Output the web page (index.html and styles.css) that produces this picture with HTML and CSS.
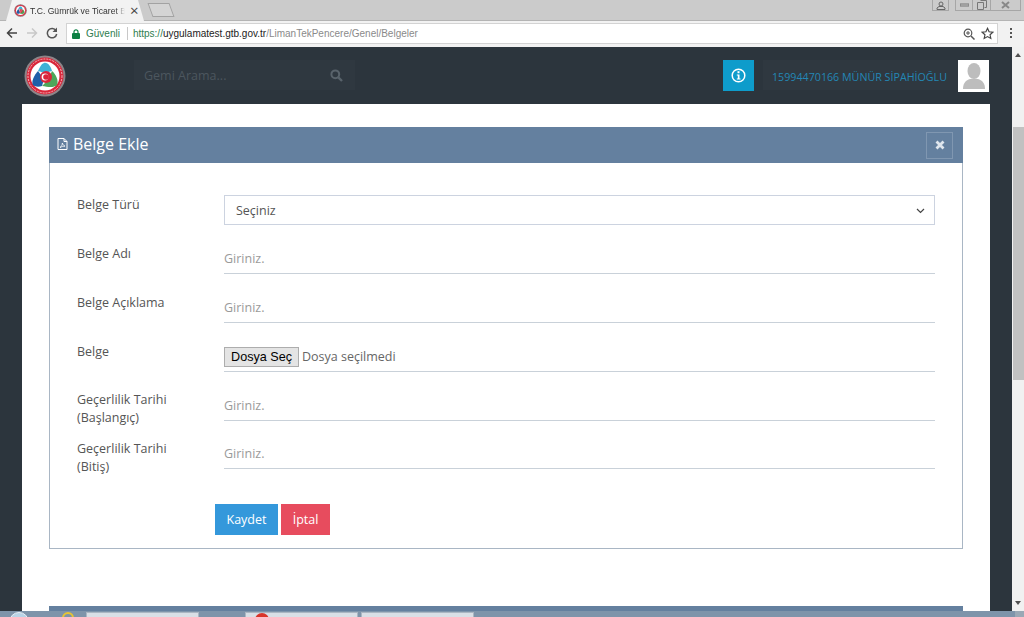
FILE: index.html
```html
<!DOCTYPE html>
<html lang="tr">
<head>
    <meta charset="UTF-8">
    <meta name="viewport" content="width=device-width, initial-scale=1.0">
    <title>T.C. Gümrük ve Ticaret Bakanlığı</title>
    <link rel="stylesheet" href="styles.css">
</head>
<body>
    <svg class="defs" width="0" height="0">
        <symbol id="logo" viewBox="0 0 42 42">
            <circle cx="21" cy="21" r="20.5" fill="#8d8488"/>
            <circle cx="21" cy="21" r="18.5" fill="#d9263a"/>
            <circle cx="21" cy="21" r="17" fill="none" stroke="#f0b8bc" stroke-width="1" stroke-dasharray="2 1"/>
            <circle cx="21" cy="21" r="14.5" fill="#fff"/>
            <path d="M20 8 C24 7 27 12 28 16 L21 18 L14 16 C16 12 17 9 20 8 Z" fill="#3fb2d6"/>
            <path d="M9 30 C7 27 10 20 14 16 L20 24 L18 31 C15 32 11 32 9 30 Z" fill="#1f5fa8"/>
            <path d="M28 16 C32 19 35 26 33 30 C30 33 24 32 18 31 L24 25 Z" fill="#4da65a"/>
            <circle cx="22" cy="22" r="6" fill="#d9263a"/>
            <circle cx="21" cy="22" r="3.4" fill="#fff"/>
            <circle cx="22" cy="22" r="2.8" fill="#d9263a"/>
        </symbol>
    </svg>

    <div class="tabstrip">
        <div class="tab">
            <svg class="favicon" width="13" height="13"><use href="#logo"/></svg>
            <span class="tab-title">T.C. Gümrük ve Ticaret Ba</span>
            <span class="tab-close">×</span>
        </div>
        <div class="newtab"></div>
        <div class="window-controls">
            <span class="win-btn win-user">
                <svg width="10" height="9" viewBox="0 0 10 9"><circle cx="5" cy="3" r="2" fill="none" stroke="#666"/><path d="M1 8.500h8V7L7 5.500H3L1 7z" fill="none" stroke="#666"/></svg>
            </span>
            <div class="win-group">
                <span class="win-btn win-min"><svg width="9" height="4"><rect y="1" width="9" height="2" fill="none" stroke="#777"/></svg></span>
                <span class="win-btn win-max"><svg width="10" height="10" viewBox="0 0 10 10"><path d="M3.500.5h6v7h-2M.5 2.500h6v7h-6z" fill="none" stroke="#777"/></svg></span>
                <span class="win-btn win-x"><svg width="9" height="8" viewBox="0 0 9 8"><path d="M1 1l7 6M8 1l-7 6" stroke="#888" stroke-width="2"/></svg></span>
            </div>
        </div>
    </div>

    <div class="toolbar">
        <div class="nav-icons">
            <svg width="12" height="12" viewBox="0 0 12 12"><path d="M11 6H2M6 1.500L1.500 6 6 10.500" fill="none" stroke="#444" stroke-width="1.500"/></svg>
            <svg width="12" height="12" viewBox="0 0 12 12"><path d="M1 6h9M6 1.500L10.500 6 6 10.500" fill="none" stroke="#c8c8c8" stroke-width="1.500"/></svg>
            <svg width="12" height="12" viewBox="0 0 12 12"><path d="M10 3.500A4.700 4.700 0 1 0 10.700 7" fill="none" stroke="#555" stroke-width="1.500"/><path d="M11 .5v4.500H6.500z" fill="#555"/></svg>
        </div>
        <div class="omnibox">
            <svg class="lock" width="8" height="10" viewBox="0 0 8 10"><path d="M2 4V2.800a2 2 0 0 1 4 0V4" fill="none" stroke="#0b8043" stroke-width="1.200"/><rect y="4" width="8" height="6" rx="1" fill="#0b8043"/></svg>
            <span class="secure">Güvenli</span>
            <span class="omni-sep"></span>
            <span class="url"><span class="url-scheme">https://</span><span class="url-host">uygulamatest.gtb.gov.tr</span>/LimanTekPencere/Genel/Belgeler</span>
            <svg class="omni-zoom" width="12" height="12" viewBox="0 0 12 12"><circle cx="5" cy="5" r="3.800" fill="none" stroke="#555" stroke-width="1.200"/><path d="M8 8l3.500 3.500" stroke="#555" stroke-width="1.500"/><path d="M3 5h4M5 3v4" stroke="#555"/></svg>
            <svg class="omni-star" width="13" height="13" viewBox="0 0 24 24"><path d="M12 2.500l2.900 6.300 6.900.8-5.100 4.700 1.400 6.800-6.100-3.400-6.100 3.400 1.400-6.800-5.100-4.700 6.900-.8z" fill="none" stroke="#444" stroke-width="2.200"/></svg>
        </div>
        <div class="menu-dots"><i></i><i></i><i></i></div>
    </div>

    <div class="viewport">
        <div class="page">
            <header class="topbar">
                <svg class="logo" width="42" height="42"><use href="#logo"/></svg>
                <div class="search">
                    <span class="search-text">Gemi Arama...</span>
                    <svg width="13" height="13" viewBox="0 0 13 13"><circle cx="5.300" cy="5.300" r="3.900" fill="none" stroke="#59636b" stroke-width="2"/><path d="M8.300 8.300l3.700 3.700" stroke="#59636b" stroke-width="2.400"/></svg>
                </div>
                <div class="info-btn">
                    <svg width="15" height="15" viewBox="0 0 15 15"><circle cx="7.500" cy="7.500" r="6.300" fill="none" stroke="#fff" stroke-width="1.500"/><rect x="6.500" y="3.200" width="2" height="2" fill="#fff"/><path d="M5.800 6.500h2.700v4h1v1h-3.700v-1h1v-3h-1z" fill="#fff"/></svg>
                </div>
                <div class="user-name">15994470166 MÜNÜR SİPAHİOĞLU</div>
                <div class="avatar">
                    <svg width="24" height="28" viewBox="0 0 24 28"><ellipse cx="12" cy="9" rx="6.500" ry="8" fill="#bdbdbd"/><path d="M1 27c0-6 3-9 7-10h8c4 1 7 4 7 10z" fill="#bdbdbd"/></svg>
                </div>
            </header>

            <main class="content">
                <section class="panel">
                    <div class="panel-head">
                        <h2 class="panel-title">
                            <svg width="11" height="12" viewBox="0 0 11 12"><path d="M1 .5h6l3 3v8H1z" fill="none" stroke="#fff"/><path d="M7 .5v3h3" fill="none" stroke="#fff"/><path d="M3 9.500c1.500-1 2.500-3 2.300-4.500.6 1.500 1.300 2.500 2.700 3.200-1.500-.1-3.300.3-5 1.300z" fill="none" stroke="#fff" stroke-width=".8"/></svg>
                            Belge Ekle
                        </h2>
                        <button class="panel-close" type="button">
                            <svg width="10" height="10" viewBox="0 0 10 10"><path d="M1.500 1.500l7 7M8.500 1.500l-7 7" stroke="#dfe6ee" stroke-width="2.800"/></svg>
                        </button>
                    </div>
                    <form class="panel-body">
                        <div class="form-row">
                            <label for="tur">Belge Türü</label>
                            <div class="select-wrap">
                                <select id="tur">
                                    <option>Seçiniz</option>
                                </select>
                                <svg class="chevron" width="9" height="6" viewBox="0 0 9 6"><path d="M1 1l3.500 3.500L8 1" fill="none" stroke="#444" stroke-width="1.200"/></svg>
                            </div>
                        </div>
                        <div class="form-row">
                            <label for="ad">Belge Adı</label>
                            <input id="ad" type="text" placeholder="Giriniz.">
                        </div>
                        <div class="form-row">
                            <label for="aciklama">Belge Açıklama</label>
                            <input id="aciklama" type="text" placeholder="Giriniz.">
                        </div>
                        <div class="form-row">
                            <label>Belge</label>
                            <div class="file-field">
                                <button class="file-btn" type="button">Dosya Seç</button>
                                <span class="file-name">Dosya seçilmedi</span>
                            </div>
                        </div>
                        <div class="form-row form-row-tight">
                            <label class="label-two-line" for="baslangic">Geçerlilik Tarihi (Başlangıç)</label>
                            <input id="baslangic" type="text" placeholder="Giriniz.">
                        </div>
                        <div class="form-row">
                            <label for="bitis">Geçerlilik Tarihi (Bitiş)</label>
                            <input id="bitis" type="text" placeholder="Giriniz.">
                        </div>
                        <div class="form-actions">
                            <button class="btn btn-save" type="button">Kaydet</button>
                            <button class="btn btn-cancel" type="button">İptal</button>
                        </div>
                    </form>
                </section>
                <div class="panel-next"></div>
            </main>
        </div>
        <div class="scrollbar">
            <span class="arrow-up"></span>
            <div class="thumb"></div>
            <span class="arrow-down"></span>
        </div>
    </div>

    <div class="taskbar">
        <span class="orb"></span>
        <span class="task-ie"></span>
        <span class="task task-first"></span>
        <span class="task task-chrome"><i></i></span>
        <span class="task task-last"></span>
        <span class="task-end"></span>
    </div>
</body>
</html>
```

FILE: styles.css
```css
html, body {
    margin: 0;
    padding: 0;
    height: 617px;
    overflow: hidden;
}
body {
    display: flex;
    flex-direction: column;
    font-family: "Open Sans", Arial, sans-serif;
    background-color: #fff;
}
.defs {
    display: none;
}

/* browser chrome */
.tabstrip {
    height: 21px;
    flex: none;
    display: flex;
    background-color: #cbcbcb;
    border-bottom: 1px solid #b4b4b4;
    box-sizing: border-box;
    padding-left: 6px;
}
.tab {
    width: 138px;
    height: 21px;
    box-sizing: border-box;
    padding-left: 8px;
    display: flex;
    align-items: center;
    background-color: #f2f2f2;
    clip-path: polygon(0 100%, 6px 0, 132px 0, 100% 100%);
}
.favicon {
    flex: none;
    margin-right: 3px;
}
.tab-title {
    width: 95px;
    white-space: nowrap;
    font-family: "Liberation Sans", Arial, sans-serif;
    font-size: 8.600px;
    color: #333;
    -webkit-mask-image: linear-gradient(to right, #000 90%, transparent);
    mask-image: linear-gradient(to right, #000 90%, transparent);
}
.tab-close {
    margin-left: 5px;
    font-size: 15px;
    line-height: 15px;
    color: #444;
}
.newtab {
    width: 20px;
    height: 12px;
    margin: 3px 0 0 6px;
    background-color: #d4d4d4;
    border: 1px solid #a2a2a2;
    transform: skewX(20deg);
}
.window-controls {
    margin-left: auto;
    margin-right: 3px;
    display: flex;
    gap: 6px;
    align-items: flex-start;
}
.win-group {
    display: flex;
}
.win-btn {
    display: flex;
    align-items: center;
    justify-content: center;
    height: 11px;
    border: 1px solid #a6a6a6;
    border-top: none;
    box-sizing: border-box;
}
.win-user {
    width: 17px;
}
.win-min {
    width: 18px;
}
.win-max {
    width: 18px;
    border-left: none;
}
.win-x {
    width: 30px;
    border-left: none;
}

.toolbar {
    height: 26px;
    flex: none;
    display: flex;
    align-items: flex-start;
    box-sizing: border-box;
    padding-top: 2px;
    background-color: #f2f2f2;
}
.nav-icons {
    width: 66px;
    box-sizing: border-box;
    padding: 4px 0 0 6px;
    display: flex;
    gap: 8px;
}
.omnibox {
    width: 932px;
    height: 21px;
    box-sizing: border-box;
    border: 1px solid #d3d3d3;
    background-color: #fff;
    display: flex;
    align-items: center;
    padding-left: 5px;
    font-family: "Liberation Sans", Arial, sans-serif;
    font-size: 10px;
}
.lock {
    flex: none;
}
.secure {
    margin-left: 6px;
    color: #2e7d4f;
}
.omni-sep {
    width: 1px;
    height: 13px;
    margin: 0 5px 0 7px;
    background-color: #c8c8c8;
}
.url {
    color: #8a8a8a;
}
.url-scheme {
    color: #2e7d4f;
}
.url-host {
    color: #222;
}
.omni-zoom {
    margin-left: auto;
    margin-right: 6px;
}
.omni-star {
    margin-right: 3px;
}
.menu-dots {
    width: 26px;
    padding-top: 5px;
    display: flex;
    flex-direction: column;
    align-items: center;
    gap: 2px;
}
.menu-dots i {
    width: 2px;
    height: 2px;
    background-color: #555;
}

/* page */
.viewport {
    flex: 1;
    min-height: 0;
    display: flex;
    overflow: hidden;
}
.page {
    width: 1012px;
    flex: none;
    background-color: #2c353d;
}
.topbar {
    height: 57px;
    box-sizing: border-box;
    padding: 8px 23px 0 24px;
    display: flex;
    align-items: flex-start;
}
.logo {
    flex: none;
    margin-right: 68px;
}
.search {
    width: 221px;
    height: 30px;
    margin-top: 5px;
    box-sizing: border-box;
    padding: 0 12px 0 10px;
    display: flex;
    align-items: center;
    justify-content: space-between;
    background-color: #2f3840;
    font-size: 12.500px;
}
.search-text {
    color: #4c565e;
}
.info-btn {
    width: 31px;
    height: 31px;
    margin: 5px 0 0 368px;
    display: flex;
    align-items: center;
    justify-content: center;
    background-color: #0e9ccb;
}
.user-name {
    width: 195px;
    height: 30px;
    margin: 5px 0 0 9px;
    box-sizing: border-box;
    padding-left: 9px;
    line-height: 34px;
    font-size: 10.700px;
    white-space: nowrap;
    color: #2487b5;
    background-color: #2f3840;
}
.avatar {
    width: 31px;
    height: 32px;
    margin: 5px 0 0 auto;
    display: flex;
    align-items: flex-end;
    justify-content: center;
    background-color: #fff;
}
.avatar svg {
    margin-bottom: 2px;
}
.content {
    height: 520px;
    margin: 0 22px;
    box-sizing: border-box;
    padding: 23px 27px 0;
    background-color: #fff;
    overflow: hidden;
}
.panel-head {
    height: 36px;
    box-sizing: border-box;
    padding: 0 10px 0 8px;
    display: flex;
    align-items: center;
    justify-content: space-between;
    background-color: #64809f;
}
.panel-title {
    margin: -2px 0 0;
    font-size: 16px;
    font-weight: 400;
    color: #fff;
    display: flex;
    align-items: center;
    gap: 5px;
}
.panel-close {
    width: 27px;
    height: 27px;
    padding: 0;
    display: flex;
    align-items: center;
    justify-content: center;
    border: 1px solid #8097b1;
    background: none;
}
.panel-body {
    height: 386px;
    box-sizing: border-box;
    padding: 32px 27px 0;
    border: 1px solid #a9b6c4;
    border-top: none;
}
.form-row {
    display: grid;
    grid-template-columns: 147px 1fr;
    height: 30px;
    margin-bottom: 19px;
}
.form-row-tight {
    margin-bottom: 18px;
}
.form-row label {
    width: 110px;
    padding-top: 1px;
    font-size: 12.500px;
    line-height: 18px;
    color: #555;
}
.form-row .label-two-line {
    padding-top: 0;
}
.form-row input,
.form-row select {
    width: 100%;
    height: 30px;
    box-sizing: border-box;
    font-family: inherit;
    font-size: 12.500px;
    color: #555;
}
.form-row input {
    padding: 0 0 1px;
    border: none;
    border-bottom: 1px solid #c9d1d9;
    outline: none;
    background: none;
}
.form-row input::placeholder {
    color: #9a9a9a;
    opacity: 1;
}
.select-wrap {
    position: relative;
}
.form-row select {
    display: block;
    padding: 0 11px;
    border: 1px solid #ccd3e0;
    background-color: #fff;
    appearance: none;
    -webkit-appearance: none;
}
.chevron {
    position: absolute;
    top: 13px;
    right: 10px;
}
.file-field {
    height: 30px;
    box-sizing: border-box;
    display: flex;
    align-items: center;
    border-bottom: 1px solid #c9d1d9;
}
.file-btn {
    width: 75px;
    height: 20px;
    padding: 0;
    font-family: "Liberation Sans", Arial, sans-serif;
    font-size: 12.600px;
    color: #000;
    background-color: #e4e4e4;
    border: 1px solid #adadad;
}
.file-name {
    margin-left: 3px;
    font-size: 12.500px;
    color: #666;
}
.form-actions {
    margin-top: 35px;
    padding-left: 138px;
    display: flex;
    gap: 3px;
}
.btn {
    height: 31px;
    padding: 0 0 1px;
    border: none;
    font-family: inherit;
    font-size: 12.500px;
    color: #fff;
}
.btn-save {
    width: 63px;
    background-color: #3498db;
}
.btn-cancel {
    width: 49px;
    background-color: #e74c5e;
}
.panel-next {
    height: 36px;
    margin-top: 57px;
    background-color: #64809f;
}

/* scrollbar and the bit of the taskbar still in view */
.scrollbar {
    width: 12px;
    flex: none;
    position: relative;
    background-color: #f1f1f1;
}
.thumb {
    position: absolute;
    top: 80px;
    left: 1px;
    right: 0;
    height: 253px;
    background-color: #c1c1c1;
}
.arrow-up,
.arrow-down {
    position: absolute;
    left: 3px;
    border: 3px solid transparent;
}
.arrow-up {
    top: 3px;
    border-bottom: 4px solid #505050;
}
.arrow-down {
    bottom: 3px;
    border-top: 4px solid #505050;
}
.taskbar {
    height: 6px;
    flex: none;
    display: flex;
    background-color: #7e94aa;
    overflow: hidden;
}
.orb {
    width: 20px;
    height: 20px;
    margin: 1px 0 0 9px;
    border-radius: 50%;
    background-color: #b9d3e6;
    border: 1px solid #e8f0f6;
    box-sizing: border-box;
}
.task-ie {
    width: 12px;
    height: 12px;
    margin: 1px 0 0 33px;
    border-radius: 50%;
    border: 2px solid #e8c532;
    box-sizing: border-box;
}
.task {
    height: 6px;
    margin-top: 1px;
    width: 113px;
    box-sizing: border-box;
    background-color: #d9dfe6;
    border: 1px solid #aab6c2;
}
.task-first {
    margin-left: 12px;
}
.task-chrome {
    margin-left: 46px;
    padding-left: 9px;
}
.task-chrome i {
    display: block;
    width: 14px;
    height: 14px;
    border-radius: 50%;
    background-color: #d9352b;
}
.task-last {
    margin-left: 3px;
}
.task-end {
    width: 9px;
    margin-left: auto;
    background-color: #9aa8b5;
}
```
